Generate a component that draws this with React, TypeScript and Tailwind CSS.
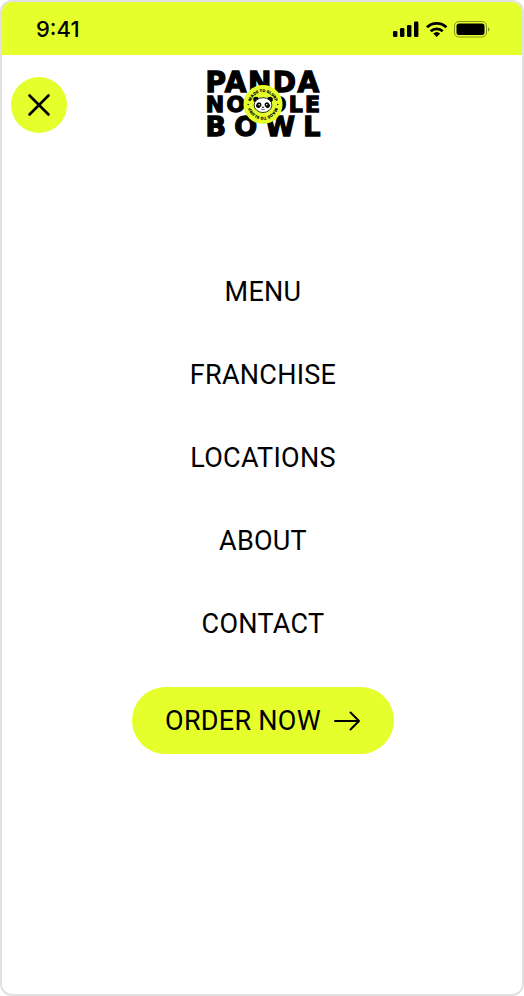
const links = ['MENU', 'FRANCHISE', 'LOCATIONS', 'ABOUT', 'CONTACT'];

function StatusIcons() {
  return (
    <svg width="98" height="20" viewBox="0 0 98 20" aria-label="Signal, Wi-Fi and battery" role="img">
      <rect x="1" y="12" width="4.4" height="6" rx="1.3" />
      <rect x="8" y="9" width="4.4" height="9" rx="1.3" />
      <rect x="15" y="6" width="4.4" height="12" rx="1.3" />
      <rect x="22" y="2.5" width="4.4" height="15.5" rx="1.3" />
      <g fill="none" stroke="#000" strokeWidth="2.9">
        <path d="M35 8.2a14.2 14.2 0 0 1 19.4 0" />
        <path d="M38.7 12.2a8.9 8.9 0 0 1 12 0" />
      </g>
      <path d="M41.2 14.5a5.2 5.2 0 0 1 7 0L44.7 18z" />
      <rect x="62.5" y="2.5" width="32" height="15.5" rx="4.5" fill="none" stroke="#000" strokeOpacity=".42" />
      <rect x="64.5" y="4.5" width="28" height="11.5" rx="2.8" />
      <path d="M96 8.2v4.4c1.9-.8 1.9-3.6 0-4.4z" opacity=".45" />
    </svg>
  );
}

function Panda() {
  return (
    <g>
      <circle cx="-7" cy="-5" r="2.8" />
      <circle cx="7" cy="-5" r="2.8" />
      <ellipse cx="0" cy="0.6" rx="8.9" ry="7.4" fill="#fff" stroke="#000" strokeWidth="0.8" />
      <ellipse cx="-4.3" cy="0.6" rx="2.4" ry="2.9" transform="rotate(35 -4.3 .6)" />
      <ellipse cx="4.3" cy="0.6" rx="2.4" ry="2.9" transform="rotate(-35 4.3 .6)" />
      <circle cx="-3.8" cy="0.3" r="0.8" fill="#fff" />
      <circle cx="3.8" cy="0.3" r="0.8" fill="#fff" />
      <path d="M-1.4 2.3h2.8L0 3.7z" />
      <path d="M-1.8 4.7q1.8 1.3 3.6 0" fill="none" stroke="#000" strokeWidth="0.6" />
    </g>
  );
}

function Logo() {
  return (
    <svg width="136" height="80" viewBox="0 0 136 80" role="img" aria-label="Panda Noodle Bowl">
      <g className="font-['DejaVu_Sans',sans-serif] font-bold" textAnchor="middle" stroke="#000" strokeWidth="1.3">
        <text x="69" y="27" fontSize="28" className="tracking-wider">PANDA</text>
        <text x="70" y="47" fontSize="22" className="tracking-widest">NOODLE</text>
        <text x="73" y="71" fontSize="27" className="tracking-[0.3em]">BOWL</text>
      </g>
      <g transform="translate(69 39.5)">
        <circle r="19.5" fill="#e4ff2c" />
        <path id="badge-top" d="M-12.4 0A12.4 12.4 0 0 1 12.4 0" fill="none" />
        <path id="badge-bottom" d="M12.4 0A12.4 12.4 0 0 1 -12.4 0" fill="none" />
        <g className="font-['Inter',sans-serif] font-black" fontSize="4" textAnchor="middle">
          <text><textPath href="#badge-top" startOffset="50%">MADE TO SLURP</textPath></text>
          <text><textPath href="#badge-bottom" startOffset="50%">MADE TO SLURP</textPath></text>
        </g>
        <circle cx="-14.8" cy="0" r="0.7" />
        <circle cx="14.8" cy="0" r="0.7" />
        <Panda />
      </g>
    </svg>
  );
}

export default function App() {
  return (
    <div className="min-h-screen overflow-hidden rounded-xl border-2 border-[#e1e1e1] bg-white font-['Roboto',sans-serif] text-black">
      <div className="flex h-[53px] items-center justify-between bg-[#e4ff2c] pr-8 pl-[34px]">
        <span className="font-['Inter',sans-serif] text-[22px] leading-7 font-medium">9:41</span>
        <StatusIcons />
      </div>
      <header className="grid grid-cols-[1fr_auto_1fr] items-center px-[9px] pt-[10px]">
        <button type="button" aria-label="Close menu" className="flex size-14 items-center justify-center rounded-full bg-[#e4ff2c]">
          <svg width="24" height="24" viewBox="0 0 24 24" fill="none" stroke="#000" strokeWidth="2.6" strokeLinecap="round">
            <path d="M2.5 2.5l19 19M21.5 2.5l-19 19" />
          </svg>
        </button>
        <a href="#home" aria-label="Panda Noodle Bowl home"><Logo /></a>
      </header>
      <nav aria-label="Main" className="flex flex-col items-center gap-[43px] pt-[127px] pl-0.5 text-[27px] leading-10 tracking-[0.01em]">
        {links.map((label) => (
          <a key={label} href={`#${label.toLowerCase()}`}>{label}</a>
        ))}
        <a href="#order" className="flex h-[67px] items-center gap-3 rounded-full bg-[#e4ff2c] px-[33px]">
          ORDER NOW
          <svg width="28" height="28" viewBox="0 0 28 28" fill="none" stroke="#000" strokeWidth="2" strokeLinecap="round" strokeLinejoin="round">
            <path d="M2 14h24M17.5 5.5L26 14l-8.5 8.5" />
          </svg>
        </a>
      </nav>
    </div>
  );
}
